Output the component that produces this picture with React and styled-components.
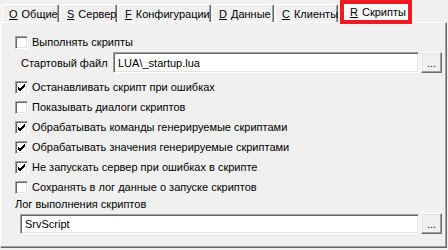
import React from "react";
import styled, { createGlobalStyle } from "styled-components";

const Global = createGlobalStyle`
  html, body { margin: 0; padding: 0; background: #f0f0f0; }
  body { font-family: Tahoma, "Liberation Sans", Arial, sans-serif; font-size: 11px; color: #000; }
  * { box-sizing: border-box; }
`;

const Window = styled.div`
  width: 448px;
  height: 250px;
  background: #f0f0f0;
  display: flex;
  flex-direction: column;
  position: relative;
`;

const TabStrip = styled.div`
  display: flex;
  align-items: flex-end;
  height: 22px;
  padding-left: 2px;
`;

const Tab = styled.div`
  width: ${(p) => p.$w}px;
  height: 18px;
  margin-right: ${(p) => p.$gap}px;
  border-top: 1px solid #fff;
  border-left: 1px solid #fff;
  border-right: 1px solid #696969;
  box-shadow: inset -1px 0 0 #a0a0a0;
  border-top-left-radius: 2px;
  border-top-right-radius: 2px;
  display: flex;
  align-items: center;
  padding-left: ${(p) => p.$pl}px;
  white-space: nowrap;
  line-height: 14px;
`;

const SelectedTab = styled.div`
  position: absolute;
  left: 340px;
  top: 0;
  width: 72px;
  height: 24px;
  border: 4px solid #ec1c24;
  background: #f9f9f9;
  display: flex;
  align-items: center;
  padding-left: 6px;
  white-space: nowrap;
`;

const U = styled.span`
  text-decoration: underline;
  margin-right: 4px;
`;

const Panel = styled.div`
  flex: 1;
  margin-right: 1px;
  margin-bottom: 2px;
  border-top: 1px solid #fff;
  border-left: 1px solid #fff;
  border-right: 1px solid #696969;
  border-bottom: 1px solid #696969;
  box-shadow: inset -1px -1px 0 #a0a0a0;
  display: flex;
  flex-direction: column;
  padding-top: 9px;
  padding-left: 14px;
  padding-right: 4px;
`;

const CheckRow = styled.div`
  display: flex;
  align-items: center;
  height: 20px;
`;

const Box = styled.span`
  width: 13px;
  height: 13px;
  flex: none;
  border-top: 1px solid #a0a0a0;
  border-left: 1px solid #a0a0a0;
  border-right: 1px solid #fff;
  border-bottom: 1px solid #fff;
  box-shadow: inset 1px 1px 0 #696969, inset -1px -1px 0 #e3e3e3;
  background: #fff;
  display: flex;
  align-items: center;
  justify-content: center;
  margin-right: 4px;
`;

const Label = styled.span`
  white-space: nowrap;
  line-height: 14px;
`;

const FileRow = styled.div`
  display: flex;
  align-items: center;
  height: 21px;
  margin-bottom: 4px;
  padding-left: 6px;
`;

const FieldLabel = styled.span`
  width: 92px;
  flex: none;
  white-space: nowrap;
`;

const Input = styled.div`
  flex: 1;
  height: ${(p) => p.$h}px;
  background: #fff;
  border-top: 1px solid #a0a0a0;
  border-left: 1px solid #a0a0a0;
  border-right: 1px solid #fff;
  border-bottom: 1px solid #fff;
  box-shadow: inset 1px 1px 0 #696969, inset -1px -1px 0 #e3e3e3;
  display: flex;
  align-items: center;
  padding-left: 4px;
  white-space: nowrap;
`;

const DotsButton = styled.div`
  width: 21px;
  height: ${(p) => p.$h}px;
  flex: none;
  margin-left: 2px;
  background: #f0f0f0;
  border-top: 1px solid #fff;
  border-left: 1px solid #fff;
  border-right: 1px solid #696969;
  border-bottom: 1px solid #696969;
  box-shadow: inset -1px -1px 0 #a0a0a0, inset 1px 1px 0 #e3e3e3;
  display: flex;
  align-items: flex-end;
  justify-content: center;
  padding-bottom: 4px;
  line-height: 10px;
`;

const LogLabel = styled.div`
  height: 16px;
  line-height: 14px;
  margin-top: 0px;
  white-space: nowrap;
`;

const LogRow = styled.div`
  display: flex;
  align-items: center;
  padding-left: 5px;
`;

const Check = () => (
  <svg width="9" height="9" viewBox="0 0 9 9">
    <path d="M1 4 L3 6 L8 1 M1 5 L3 7 L8 2 M1 6 L3 8 L8 3" stroke="#000" strokeWidth="1" fill="none" shapeRendering="crispEdges" />
  </svg>
);

const tabs = [
  { k: "O", t: "Общие", w: 57, pl: 6, gap: 1 },
  { k: "S", t: "Сервер", w: 57, pl: 6, gap: 1 },
  { k: "F", t: "Конфигурации", w: 93, pl: 6, gap: 1 },
  { k: "D", t: "Данные", w: 62, pl: 6, gap: 1 },
  { k: "С", t: "Клиенты", w: 63, pl: 6, gap: 0 },
];

const checks = [
  ["Останавливать скрипт при ошибках", true],
  ["Показывать диалоги скриптов", false],
  ["Обрабатывать команды генерируемые скриптами", true],
  ["Обрабатывать значения генерируемые скриптами", true],
  ["Не запускать сервер при ошибках в скрипте", true],
  ["Сохранять в лог данные о запуске скриптов", false],
];

export default function App() {
  return (
    <>
      <Global />
      <Window>
        <TabStrip>
          {tabs.map((t) => (
            <Tab key={t.k} $w={t.w} $pl={t.pl} $gap={t.gap}>
              <U>{t.k}</U>
              {t.t}
            </Tab>
          ))}
        </TabStrip>
        <SelectedTab>
          <U>R</U>Скрипты
        </SelectedTab>
        <Panel>
          <CheckRow>
            <Box />
            <Label>Выполнять скрипты</Label>
          </CheckRow>
          <FileRow>
            <FieldLabel>Стартовый файл</FieldLabel>
            <Input $h={21}>LUA\_startup.lua</Input>
            <DotsButton $h={21}>...</DotsButton>
          </FileRow>
          {checks.map(([t, c]) => (
            <CheckRow key={t}>
              <Box>{c && <Check />}</Box>
              <Label>{t}</Label>
            </CheckRow>
          ))}
          <LogLabel>Лог выполнения скриптов</LogLabel>
          <LogRow>
            <Input $h={20}>SrvScript</Input>
            <DotsButton $h={21}>...</DotsButton>
          </LogRow>
        </Panel>
      </Window>
    </>
  );
}
